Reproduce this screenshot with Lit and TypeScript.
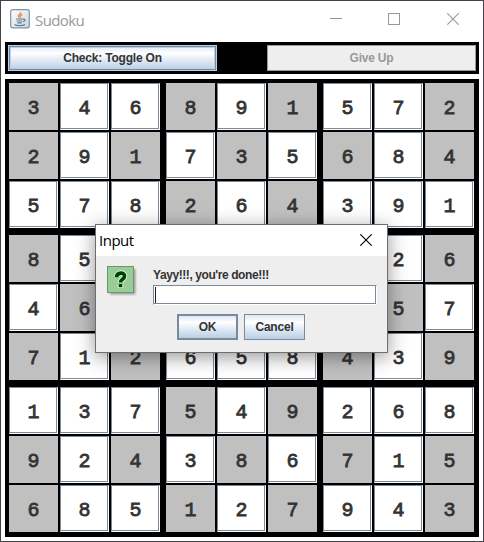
import { LitElement, html, css } from "lit";
import { customElement } from "lit/decorators.js";

// A trailing "g" marks a given (grey) cell; "_" is a cell covered by the dialog.
const ROWS = [
  "3g 4 6 8g 9 1g 5 7 2g",
  "2g 9 1g 7 3g 5 6g 8 4g",
  "5 7 8 2g 6 4g 3 9 1",
  "8g 5 _ _ _ _ _ 2 6g",
  "4 6g _ _ _ _ _ 5g 7",
  "7g 1 2g 6 5 8 4g 3 9g",
  "1 3 7 5g 4 9g 2 6 8",
  "9g 2 4g 3 8g 6 7g 1 5g",
  "6g 8 5 1g 2 7g 9 4 3g",
].map((r) => r.split(" "));

@customElement("app-root")
export class AppRoot extends LitElement {
  static styles = css`
    * { box-sizing: border-box; }
    :host {
      display: block;
      position: relative;
      width: 484px;
      height: 542px;
      overflow: hidden;
      font-family: "Liberation Sans", Arial, sans-serif;
      color: #333;
    }
    .window {
      width: 484px;
      height: 542px;
      border: 1px solid #444245;
      background: #fff;
      padding: 0 4px;
    }
    .title {
      height: 41px;
      display: flex;
      align-items: flex-start;
      color: #999;
    }
    .logo { margin: 8px 0 0 5px; width: 20px; height: 20px; }
    .name {
      font: 15px/20px "Open Sans", "Noto Sans", sans-serif;
      margin: 9px 0 0 5px;
      letter-spacing: -0.6px;
    }
    .ctl { width: 12px; height: 12px; margin-top: 12px; }
    .min { margin-left: auto; }
    .max { margin-left: 46px; }
    .cls { margin: 12px 20px 0 47px; }
    .bar {
      height: 32px;
      width: 474px;
      background: #000;
      padding: 3px;
      display: flex;
      justify-content: space-between;
    }
    .btn {
      font: bold 12px/15px "Liberation Sans", Arial, sans-serif;
      letter-spacing: -0.2px;
      color: #333;
      display: flex;
      align-items: center;
      justify-content: center;
      border: 1px solid #7a8a99;
      background: linear-gradient(#dde8f3, #fff 30%, #dde8f3 62%, #b8cfe5);
      white-space: nowrap;
    }
    .toggle {
      width: 209px;
      height: 26px;
      border: 1px solid #b8cfe5;
      box-shadow: inset 0 0 0 1px #7a8a99, inset 0 0 0 2px #b8cfe5;
      padding-top: 1px;
    }
    .give {
      width: 209px;
      height: 26px;
      background: #eee;
      color: #999;
      border-color: #999;
      padding-top: 1px;
    }
    .board {
      margin-top: 5px;
      width: 474px;
      height: 458px;
      background: #000;
      padding: 4px;
      display: grid;
      grid-template-columns: repeat(3, 151px);
      grid-template-rows: repeat(3, 145px);
      gap: 7px 6px;
    }
    .block {
      display: grid;
      grid-template-columns: repeat(3, 49px);
      grid-template-rows: repeat(3, 47px);
      gap: 2px;
    }
    .cell {
      display: flex;
      align-items: center;
      justify-content: center;
      padding-top: 4px;
      font: 20px/20px "Liberation Mono", "Courier New", monospace;
      -webkit-text-stroke: 0.8px #333;
      background: #fff;
      border: 1px solid;
      border-color: #7a8a99 #fff #fff #7a8a99;
      box-shadow: inset -1px -1px 0 #7a8a99, inset 1px 1px 0 #fff;
    }
    .given { background: #c0c0c0; border-color: #c0c0c0; box-shadow: none; }
    .dialog {
      position: absolute;
      left: 95px;
      top: 224px;
      width: 293px;
      height: 129px;
      border: 1px solid #6d6d6d;
      background: #eee;
      box-shadow: 0 4px 18px rgba(0, 0, 0, 0.42);
    }
    .dtitle {
      height: 31px;
      background: #fff;
      color: #000;
      display: flex;
      justify-content: space-between;
      padding-left: 3px;
    }
    .dname {
      font: 15px/20px "Open Sans", "Noto Sans", sans-serif;
      margin-top: 5px;
      letter-spacing: -0.5px;
    }
    .dcls { width: 12px; height: 12px; margin: 9px 15px 0 0; }
    .body { display: flex; }
    .q { width: 32px; height: 32px; margin: 10px 0 0 11px; }
    .form { margin: 12px 0 0 14px; }
    .msg {
      font: bold 12px/15px "Liberation Sans", Arial, sans-serif;
      letter-spacing: -0.42px;
      white-space: nowrap;
    }
    .field {
      width: 224px;
      height: 20px;
      margin-top: 2px;
      background: #fff;
      border: 1px solid;
      border-color: #7a8a99 #fff #fff #7a8a99;
      box-shadow: inset -1px -1px 0 #7a8a99;
      padding: 1px;
    }
    .caret { width: 1px; height: 16px; background: #222; }
    .actions { display: flex; gap: 6px; margin: 9px 0 0 24px; }
    .act { height: 26px; width: 61px; padding-top: 1px; }
    .ok { border-width: 2px; }
  `;

  private cross(cls: string) {
    return html`<svg class=${cls} viewBox="0 0 12 12" fill="none" stroke="currentColor" stroke-width="1.1">
      <path d="M.3 .3 11.7 11.7M11.7 .3 .3 11.7" />
    </svg>`;
  }

  private block(b: number) {
    const r0 = Math.floor(b / 3) * 3;
    const c0 = (b % 3) * 3;
    return html`<div class="block">
      ${[0, 1, 2].flatMap((r) =>
        [0, 1, 2].map((c) => {
          const v = ROWS[r0 + r][c0 + c];
          return html`<div class=${v.length > 1 ? "cell given" : "cell"}>${v[0] === "_" ? "" : v[0]}</div>`;
        })
      )}
    </div>`;
  }

  render() {
    return html`
      <div class="window">
        <div class="title">
          <svg class="logo" viewBox="0 0 20 20" fill="none">
            <defs><linearGradient id="lg" x1="0" y1="0" x2="1" y2="1"><stop stop-color="#fff" /><stop offset="1" stop-color="#cfd5da" /></linearGradient></defs>
            <rect x=".7" y=".7" width="18.6" height="18.1" rx="2" fill="url(#lg)" stroke="#7c95a5" stroke-width="1.2" />
            <path d="M10.8 3c.6 2-3.3 2.700-2.300 4.500.3.700 1 .9 1.200 1.500M12.300 5.500c-2.500.8-2.200 1.800-1.500 2.700" stroke="#ec8a45" stroke-width="1.400" />
            <path d="M6 10h7.200M6.700 12h5.600M7.300 13.900h4.500M13 10.300c2.800-.8 2.600 1.700 0 2.300M4.500 15.400c2 1.500 8.500 1.500 10.500 0" stroke="#56809c" stroke-width="1.200" />
          </svg>
          <span class="name">Sudoku</span>
          <svg class="ctl min" viewBox="0 0 12 12"><path d="M0 5.500H12" stroke="#999" /></svg>
          <svg class="ctl max" viewBox="0 0 12 12"><rect x=".5" y=".5" width="11" height="11" fill="none" stroke="#999" /></svg>
          ${this.cross("ctl cls")}
        </div>
        <div class="bar">
          <div class="btn toggle">Check: Toggle On</div>
          <div class="btn give">Give Up</div>
        </div>
        <div class="board">${[0, 1, 2, 3, 4, 5, 6, 7, 8].map((b) => this.block(b))}</div>
      </div>
      <div class="dialog">
        <div class="dtitle"><span class="dname">Input</span>${this.cross("dcls")}</div>
        <div class="body">
          <svg class="q" viewBox="0 0 32 32" fill="none">
            <defs><filter id="soft"><feGaussianBlur stdDeviation="1.2" /></filter></defs>
            <rect x="3" y="3" width="25.500" height="25.500" fill="#000" opacity=".35" filter="url(#soft)" />
            <rect x=".5" y=".5" width="26" height="26" fill="#99cc99" stroke="#669966" />
            <path d="M9.800 11C10 5.800 18 6 17.500 10.500 17.200 13.500 13.500 13 13.500 16.800M13.500 18V22" stroke="#ccffcc" stroke-width="5.600" />
            <path d="M9.500 11.200C10 5.800 18 6 17.500 10.500 17.200 13.500 13.500 13 13.500 16.500M13.500 18V21.200" stroke="#004000" stroke-width="3.600" />
          </svg>
          <div class="form">
            <div class="msg">Yayy!!!, you're done!!!</div>
            <div class="field"><div class="caret"></div></div>
            <div class="actions">
              <div class="btn act ok">OK</div>
              <div class="btn act">Cancel</div>
            </div>
          </div>
        </div>
      </div>
    `;
  }
}
